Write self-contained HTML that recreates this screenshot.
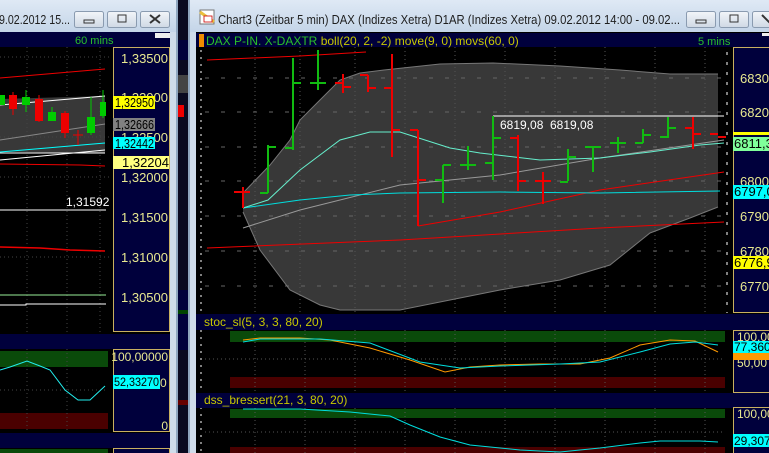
<!DOCTYPE html>
<html><head><meta charset="utf-8"><style>
html,body{margin:0;padding:0;background:#000;overflow:hidden}
svg{display:block}
text{font-family:"Liberation Sans",sans-serif}
</style></head><body>
<svg width="769" height="453" viewBox="0 0 769 453" xmlns="http://www.w3.org/2000/svg">
<defs>
<linearGradient id="tb" x1="0" y1="0" x2="0" y2="1"><stop offset="0" stop-color="#dfe9f5"/><stop offset="1" stop-color="#c4d5e8"/></linearGradient>
<linearGradient id="btn" x1="0" y1="0" x2="0" y2="1"><stop offset="0" stop-color="#f2f5f9"/><stop offset="1" stop-color="#cfd9e5"/></linearGradient>
</defs>
<rect width="769" height="453" fill="#000"/>

<rect x="178" y="0" width="10" height="453" fill="#0a0a20"/>
<rect x="178" y="40" width="10" height="20" fill="#00003c"/>
<rect x="178" y="75" width="10" height="18" fill="#444"/>
<rect x="178" y="105" width="6" height="12" fill="#e00"/>
<rect x="178" y="290" width="10" height="60" fill="#00003c"/>
<rect x="178" y="310" width="10" height="4" fill="#040"/>
<rect x="178" y="400" width="10" height="5" fill="#600"/>

<rect x="0" y="0" width="178" height="453" fill="#cfdcea"/>
<rect x="0" y="0" width="178" height="32" fill="url(#tb)"/>
<rect x="176" y="0" width="2" height="453" fill="#8fa6bf"/>
<text x="-1" y="24" font-size="13" fill="#1e1e1e" textLength="71" lengthAdjust="spacingAndGlyphs">9.02.2012 15...</text>
<g stroke="#8a9bb0" fill="url(#btn)"><rect x="74.5" y="11.5" width="29" height="16" rx="2"/><rect x="107.5" y="11.5" width="29" height="16" rx="2"/><rect x="140.5" y="11.5" width="29" height="16" rx="2"/></g>
<rect x="84" y="20" width="10" height="3" fill="none" stroke="#333"/>
<rect x="118" y="15" width="8" height="7" fill="none" stroke="#333"/>
<path d="M150 15 L160 23 M160 15 L150 23" stroke="#333" stroke-width="2"/>
<rect x="0" y="32" width="170" height="421" fill="#000"/>
<rect x="0" y="32" width="170" height="15" fill="#00003c"/>
<text x="75" y="44" font-size="11" fill="#2ac02a">60 mins</text>
<rect x="155" y="33" width="15" height="5" fill="#eee"/>
<rect x="113.5" y="47.5" width="56" height="284" fill="#00003c" stroke="#c8b060"/>
<g font-size="13" fill="#e8e890" text-anchor="end">
<text x="168" y="63">1,33500</text><text x="168" y="102">1,33000</text><text x="168" y="142">1,32500</text><text x="168" y="182">1,32000</text><text x="168" y="222">1,31500</text><text x="168" y="262">1,31000</text><text x="168" y="302">1,30500</text>
</g>
<rect x="113" y="96" width="42" height="13" fill="#ffff00"/><text x="115" y="107" font-size="13" fill="#000" textLength="39" lengthAdjust="spacingAndGlyphs">1,32950</text>
<rect x="113" y="118" width="42" height="13" fill="#808080"/><text x="115" y="129" font-size="13" fill="#000" textLength="39" lengthAdjust="spacingAndGlyphs">1,32666</text>
<rect x="113" y="137" width="42" height="12" fill="#00ffff"/><text x="115" y="148" font-size="13" fill="#000" textLength="39" lengthAdjust="spacingAndGlyphs">1,32442</text>
<rect x="113" y="156" width="56" height="13" fill="#ffff80"/><text x="122" y="167" font-size="13" fill="#000">1,32204</text>
<polygon points="0,99 105,96 105,153 0,152" fill="#383838"/>
<g stroke="#444" stroke-dasharray="1,3"><path d="M27 47V332M67 47V332M100 47V332M0 57H110M0 137H110M0 177H110M0 257H110"/></g>
<polyline points="0,78 105,69" stroke="#e00" fill="none"/>
<polyline points="0,105 105,96" stroke="#fff" fill="none"/>
<polyline points="0,140 105,124" stroke="#888" fill="none"/>
<polyline points="0,152 105,143" stroke="#0ff" fill="none"/>
<polyline points="0,160 105,150" stroke="#fff" fill="none"/>
<polyline points="0,153 105,153" stroke="#fff" fill="none"/>
<polyline points="0,164 80,165 105,166" stroke="#e00" fill="none"/>
<g stroke-width="1">
<rect x="0" y="95" width="5" height="10" fill="#0c0"/>
<rect x="9" y="95" width="8" height="14" fill="#e00"/><line x1="13" y1="92" x2="13" y2="115" stroke="#e00"/>
<rect x="22" y="97" width="8" height="8" fill="#0c0"/><line x1="26" y1="90" x2="26" y2="112" stroke="#0c0"/>
<rect x="35" y="99" width="8" height="22" fill="#e00"/><line x1="39" y1="95" x2="39" y2="122" stroke="#e00"/>
<rect x="48" y="112" width="8" height="9" fill="#0c0"/><line x1="52" y1="107" x2="52" y2="121" stroke="#0c0"/>
<rect x="61" y="113" width="8" height="20" fill="#e00"/><line x1="65" y1="111" x2="65" y2="138" stroke="#e00"/>
<line x1="78" y1="130" x2="78" y2="145" stroke="#e00"/><line x1="73" y1="135" x2="83" y2="135" stroke="#e00"/>
<rect x="87" y="117" width="8" height="16" fill="#0c0"/><line x1="91" y1="97" x2="91" y2="135" stroke="#0c0"/>
<rect x="100" y="102" width="6" height="14" fill="#0c0"/><line x1="103" y1="90" x2="103" y2="118" stroke="#0c0"/>
</g>
<text x="66" y="206" font-size="12" fill="#fff">1,31592</text>
<line x1="0" y1="210" x2="106" y2="210" stroke="#fff"/>
<polyline points="0,247 40,248 70,250 105,251" stroke="#e00" fill="none" stroke-width="1.5"/>
<line x1="0" y1="295" x2="106" y2="295" stroke="#9e9"/>
<polyline points="0,305 26,305 26,304 106,304" stroke="#fff" fill="none"/>
<rect x="0" y="334" width="170" height="15" fill="#00003c"/>
<rect x="0" y="351" width="108" height="16" fill="#0a4a0a"/>
<rect x="0" y="413" width="108" height="16" fill="#4a0000"/>
<g stroke="#444" stroke-dasharray="1,3"><path d="M27 349V432M67 349V432M0 390H108"/></g>
<polyline points="0,370 10,367 27,361 40,366 50,370 65,390 78,400 90,400 105,386" stroke="#2ee" fill="none"/>
<rect x="113.5" y="349.5" width="56" height="82" fill="#00003c" stroke="#c8b060"/>
<text x="168" y="361" font-size="12" fill="#e8e890" text-anchor="end">100,00000</text>
<rect x="113" y="375" width="47" height="14" fill="#00ffff"/><text x="114" y="386" font-size="12" fill="#000" textLength="45" lengthAdjust="spacingAndGlyphs">52,33270</text>
<text x="160" y="387" font-size="12" fill="#e8e890">0</text>
<text x="168" y="430" font-size="12" fill="#e8e890" text-anchor="end">0</text>
<rect x="0" y="433" width="170" height="15" fill="#00003c"/>
<rect x="0" y="449" width="108" height="4" fill="#0a4a0a"/>
<rect x="113.5" y="448.5" width="56" height="6" fill="#00003c" stroke="#c8b060"/>

<rect x="188" y="0" width="581" height="453" fill="#cfdcea"/>
<rect x="188" y="0" width="581" height="32" fill="url(#tb)"/>
<rect x="188" y="0" width="2" height="453" fill="#8fa6bf"/>
<rect x="200" y="10" width="14" height="14" fill="#fff" stroke="#777"/>
<path d="M200 12 L214 22" stroke="#e8c040" stroke-width="3"/><rect x="204" y="16" width="8" height="6" fill="#fff" stroke="#c00" stroke-width="0.8"/>
<text x="218" y="24" font-size="13" fill="#1e1e1e" textLength="462" lengthAdjust="spacingAndGlyphs">Chart3 (Zeitbar 5 min)  DAX (Indizes Xetra) D1AR (Indizes Xetra) 09.02.2012 14:00 - 09.02...</text>
<g stroke="#8a9bb0" fill="url(#btn)"><rect x="686.5" y="11.5" width="29" height="16" rx="2"/><rect x="719.5" y="11.5" width="29" height="16" rx="2"/><rect x="752.5" y="11.5" width="29" height="16" rx="2"/></g>
<rect x="696" y="20" width="10" height="3" fill="none" stroke="#333"/>
<rect x="730" y="15" width="8" height="7" fill="none" stroke="#333"/>
<path d="M762 15 L770 23" stroke="#333" stroke-width="2"/>
<rect x="196" y="32" width="573" height="421" fill="#000"/>
<rect x="196" y="33" width="573" height="14" fill="#00003c"/>
<rect x="199" y="34" width="5" height="13" fill="#f08c00"/>
<text x="206" y="45" font-size="12" fill="#2ac02a">DAX P-IN. X-DAXTR <tspan fill="#c8c800">boll(20, 2, -2) move(9, 0) movs(60, 0)</tspan></text>
<text x="698" y="45" font-size="11" fill="#2ac02a">5 mins</text>
<rect x="762" y="33" width="7" height="3" fill="#eee"/>
<g stroke="#fff" stroke-dasharray="2,5"><path d="M201 50V453"/></g>
<polygon points="243,193 270,165 290,140 300,120 320,100 340,80 360,73 384,70 440,64 493,63 560,66 620,70 670,74 718,74 718,207 690,218 650,233 610,265 560,280 500,290 450,300 400,310 340,310 320,305 290,290 260,250 243,212" fill="#383838"/>
<g stroke="#555" stroke-dasharray="1,3"><path d="M255 47V313M300 47V313M355 47V313M405 47V313M455 47V313M505 47V313M555 47V313M605 47V313M655 47V313M705 47V313"/></g>
<g stroke="#666" stroke-dasharray="4,12"><path d="M205 78H733M205 112H733M205 147H733M205 181H733M205 216H733M205 251H733M205 286H733"/></g>
<polyline points="243,193 270,165 290,140 300,120 320,100 340,80 360,73 384,70 440,64 493,63 560,66 620,70 670,74 718,74" stroke="#777" fill="none"/>
<polyline points="243,212 260,250 290,290 320,305 340,310 400,310 450,300 500,290 560,280 610,265 650,233 690,218 718,207" stroke="#777" fill="none"/>
<polyline points="207,60 300,56 366,52" stroke="#e00" fill="none"/>
<polyline points="207,248 400,240 600,228 724,222" stroke="#e00" fill="none"/>
<polyline points="418,226 500,212 600,190 724,172" stroke="#e00" fill="none"/>
<polyline points="243,228 300,210 400,185 500,175 600,158 724,140" stroke="#999" fill="none"/>
<polyline points="243,208 300,200 350,195 400,193 500,192 600,193 720,191" stroke="#0dd" fill="none"/>
<polyline points="243,208 268,200 300,170 340,140 370,132 400,132 450,148 480,153 540,160 600,158 650,152 700,145 724,143" stroke="#6ec" fill="none"/>
<line x1="493" y1="116" x2="724" y2="116" stroke="#fff"/>
<text x="500" y="129" font-size="12" fill="#fff">6819,08</text><text x="550" y="129" font-size="12" fill="#fff">6819,08</text>
<g stroke-width="2" fill="none">
<path stroke="#e00" d="M243 187V208M234 192H243M243 192H250"/>
<path stroke="#1b1" d="M268 145V193M260 193H268M268 147H276"/>
<path stroke="#1b1" d="M293 58V150M285 148H293M293 83H301"/>
<path stroke="#1b1" d="M318 50V90M310 83H318M318 83H326"/>
<path stroke="#e00" d="M343 74V93M335 83H343M343 87H351"/>
<path stroke="#e00" d="M368 75V92M360 75H368M368 88H376"/>
<path stroke="#e00" d="M392 54V157M384 88H392M392 130H400"/>
<path stroke="#e00" d="M418 130V226M410 130H418M418 180H426"/>
<path stroke="#1b1" d="M443 165V203M435 180H443M443 165H451"/>
<path stroke="#1b1" d="M468 146V170M460 165H468M468 165H476"/>
<path stroke="#1b1" d="M493 116V180M485 163H493M493 138H501"/>
<path stroke="#e00" d="M518 135V191M510 138H518M518 181H526"/>
<path stroke="#e00" d="M543 172V204M535 181H543M543 181H551"/>
<path stroke="#1b1" d="M568 149V181M560 182H568M568 157H576"/>
<path stroke="#1b1" d="M593 147V172M585 147H593M593 147H601"/>
<path stroke="#1b1" d="M618 137V153M610 143H618M618 143H626"/>
<path stroke="#1b1" d="M643 129V143M635 143H643M643 135H651"/>
<path stroke="#1b1" d="M668 117V138M660 137H668M668 128H676"/>
<path stroke="#e00" d="M693 117V149M685 128H693M693 134H701"/>
<path stroke="#e00" d="M710 134H718M718 137H726"/>
</g>
<rect x="733.5" y="47.5" width="40" height="265" fill="#00003c" stroke="#c8b060"/>
<g stroke="#fff" stroke-dasharray="3,7"><path d="M727 52V313"/></g>
<g font-size="13" fill="#e8e890">
<text x="740" y="83">6830,0</text><text x="740" y="117">6820,0</text><text x="740" y="151">6810,0</text><text x="740" y="186">6800,0</text><text x="740" y="221">6790,0</text><text x="740" y="256">6780,0</text><text x="740" y="291">6770,0</text>
</g>
<rect x="733" y="132" width="36" height="3" fill="#ffff00"/>
<rect x="733" y="137" width="36" height="14" fill="#80ff9a"/><text x="734" y="148" font-size="13" fill="#000">6811,35</text>
<rect x="733" y="185" width="36" height="14" fill="#00ffff"/><text x="734" y="196" font-size="13" fill="#000">6797,05</text>
<rect x="733" y="256" width="36" height="13" fill="#ffff00"/><text x="734" y="267" font-size="13" fill="#000">6776,90</text>
<rect x="196" y="314" width="573" height="16" fill="#00003c"/>
<text x="204" y="326" font-size="12" fill="#c8c800">stoc_sl(5, 3, 3, 80, 20)</text>
<rect x="230" y="331" width="495" height="11" fill="#0a4a0a"/>
<rect x="230" y="377" width="495" height="11" fill="#4a0000"/>
<g stroke="#555" stroke-dasharray="1,3"><path d="M255 330V392M305 330V392M355 330V392M405 330V392M455 330V392M505 330V392M555 330V392M605 330V392M655 330V392M705 330V392M205 359H725"/></g>
<polyline points="243,340 260,338 300,338 330,340 370,348 410,360 445,372 470,367 500,365 540,364 580,364 610,358 640,345 670,340 695,341 718,352" stroke="#f90" fill="none"/>
<polyline points="243,342 260,339 320,339 370,343 420,362 460,368 500,366 560,364 600,362 640,352 670,344 695,342 718,345" stroke="#0dd" fill="none"/>
<rect x="733.5" y="330.5" width="40" height="62" fill="#00003c" stroke="#c8b060"/>
<text x="737" y="341" font-size="12" fill="#e8e890">100,00</text>
<text x="737" y="367" font-size="12" fill="#e8e890">50,00</text>
<rect x="733" y="341" width="36" height="12" fill="#00ffff"/><text x="734" y="351" font-size="12" fill="#000">77,3608</text>
<rect x="733" y="353" width="36" height="7" fill="#f90"/>
<rect x="196" y="393" width="573" height="15" fill="#00003c"/>
<text x="204" y="404" font-size="12" fill="#c8c800">dss_bressert(21, 3, 80, 20)</text>
<rect x="230" y="409" width="495" height="9" fill="#0a4a0a"/>
<rect x="230" y="447" width="495" height="6" fill="#4a0000"/>
<g stroke="#555" stroke-dasharray="1,3"><path d="M255 408V453M305 408V453M355 408V453M405 408V453M455 408V453M505 408V453M555 408V453M605 408V453M655 408V453M705 408V453M205 432H725"/></g>
<polyline points="243,409 300,409 350,412 390,416 410,425 440,437 470,445 520,450 560,452 600,448 640,443 660,441 700,441 718,442" stroke="#0dd" fill="none"/>
<rect x="733.5" y="407.5" width="40" height="50" fill="#00003c" stroke="#c8b060"/>
<text x="737" y="418" font-size="12" fill="#e8e890">100,00</text>
<rect x="733" y="434" width="36" height="13" fill="#00ffff"/><text x="734" y="445" font-size="12" fill="#000">29,3073</text>
</svg>
</body></html>
